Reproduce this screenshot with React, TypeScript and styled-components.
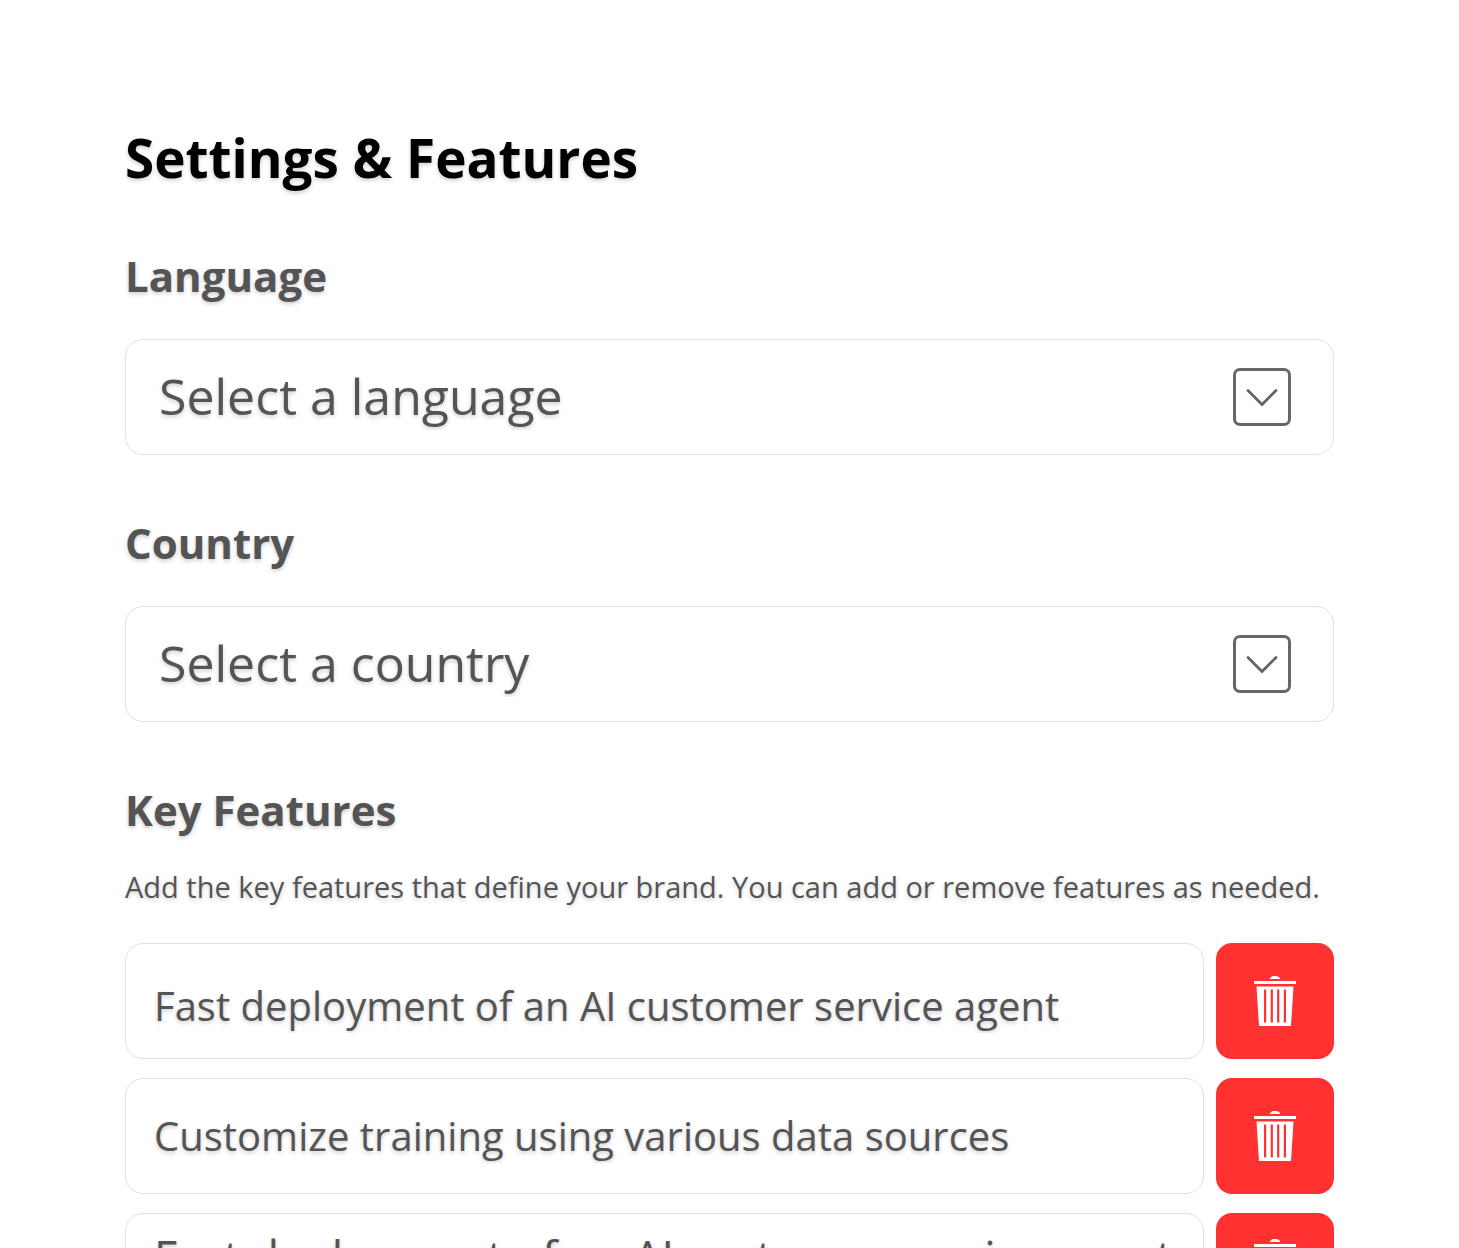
import React from "react";
import styled, { createGlobalStyle } from "styled-components";

const GlobalStyle = createGlobalStyle`
  *, *::before, *::after { box-sizing: border-box; }
  body {
    margin: 0;
    background: #ffffff;
    color: #545454;
    font-family: "Open Sans", "Noto Sans", sans-serif;
  }
`;

const Page = styled.main`
  height: 100vh;
  overflow: hidden;
  padding: 120px 125px 0;
  text-shadow: 0 2px 4px rgba(0, 0, 0, 0.2);
`;

const Title = styled.h1`
  margin: 0 0 48px;
  color: #000000;
  font-size: 53px;
  font-weight: 700;
  line-height: 76px;
`;

const Field = styled.section`
  margin-bottom: 56px;
`;

const Label = styled.label`
  display: block;
  margin-bottom: 32px;
  font-size: 42px;
  font-weight: 700;
  line-height: 63px;
`;

const SectionTitle = styled.h2`
  margin: 0 0 22px;
  font-size: 42px;
  font-weight: 700;
  line-height: 63px;
`;

const Hint = styled.p`
  margin: 0 0 32px;
  font-size: 29px;
  line-height: 48px;
  white-space: nowrap;
`;

const SelectBox = styled.div`
  display: grid;
  align-items: center;

  > * {
    grid-area: 1 / 1;
  }

  > svg {
    justify-self: end;
    margin-right: 43px;
    pointer-events: none;
  }
`;

const Select = styled.select`
  appearance: none;
  width: 100%;
  height: 116px;
  padding: 0 120px 2px 33px;
  border: 1px solid #e1e1e1;
  border-radius: 18px;
  background: #ffffff;
  color: inherit;
  font: 400 50px "Open Sans", "Noto Sans", sans-serif;
  text-shadow: inherit;
`;

const FeatureList = styled.ul`
  display: flex;
  flex-direction: column;
  gap: 19px;
  margin: 0;
  padding: 0;
  list-style: none;
`;

const FeatureRow = styled.li<{ $height: number }>`
  display: grid;
  grid-template-columns: 1fr 118px;
  gap: 12px;
  height: ${(p) => p.$height}px;
`;

const FeatureInput = styled.input<{ $size: number; $top: number; $bottom: number }>`
  width: 100%;
  height: 100%;
  padding: ${(p) => p.$top}px 24px ${(p) => p.$bottom}px 28px;
  border: 1px solid #e1e1e1;
  border-radius: 18px;
  background: #ffffff;
  color: inherit;
  font: 400 ${(p) => p.$size}px "Open Sans", "Noto Sans", sans-serif;
  text-shadow: inherit;
`;

const RemoveButton = styled.button`
  display: grid;
  place-items: center;
  padding: 0;
  border: 0;
  border-radius: 16px;
  background: #ff3131;
  cursor: pointer;
`;

const ChevronBox = () => (
  <svg width="58" height="58" viewBox="0 0 58 58" fill="none" stroke="#666666" aria-hidden="true">
    <rect x="1.5" y="1.5" width="55" height="55" rx="5.5" strokeWidth="3" />
    <path d="M15 22.5 29 36.5 43 22.5" strokeWidth="2.8" strokeLinecap="round" />
  </svg>
);

const TrashIcon = () => (
  <svg width="42" height="50" viewBox="0 0 42 50" fill="#ffffff" aria-hidden="true">
    <path d="M15.5 3C17 .8 18.2 0 20 0h2c1.8 0 3 .8 4.5 3z" />
    <path d="M0 5h42v3H0z" />
    <path
      fillRule="evenodd"
      d="M2.5 10.5h37L37 50H5zM10 13.5v33h2.2v-33zM16.7 13.5v33h2.2v-33zM23.1 13.5v33h2.2v-33zM29.8 13.5v33h2.2v-33z"
    />
  </svg>
);

const features = [
  { text: "Fast deployment of an AI customer service agent", size: 40, height: 116, top: 8, bottom: 0 },
  { text: "Customize training using various data sources", size: 40, height: 116, top: 0, bottom: 2 },
  { text: "Fast deployment of an AI customer service agent", size: 45, height: 102, top: 0, bottom: 16 },
];

export default function App() {
  return (
    <>
      <GlobalStyle />
      <Page>
        <Title>Settings &amp; Features</Title>

        <Field>
          <Label htmlFor="language">Language</Label>
          <SelectBox>
            <Select id="language" defaultValue="">
              <option value="">Select a language</option>
            </Select>
            <ChevronBox />
          </SelectBox>
        </Field>

        <Field>
          <Label htmlFor="country">Country</Label>
          <SelectBox>
            <Select id="country" defaultValue="">
              <option value="">Select a country</option>
            </Select>
            <ChevronBox />
          </SelectBox>
        </Field>

        <section>
          <SectionTitle>Key Features</SectionTitle>
          <Hint>Add the key features that define your brand. You can add or remove features as needed.</Hint>
          <FeatureList>
            {features.map((feature, index) => (
              <FeatureRow key={index} $height={feature.height}>
                <FeatureInput
                  aria-label={`Feature ${index + 1}`}
                  defaultValue={feature.text}
                  $size={feature.size}
                  $top={feature.top}
                  $bottom={feature.bottom}
                />
                <RemoveButton type="button" aria-label={`Remove feature ${index + 1}`}>
                  <TrashIcon />
                </RemoveButton>
              </FeatureRow>
            ))}
          </FeatureList>
        </section>
      </Page>
    </>
  );
}
